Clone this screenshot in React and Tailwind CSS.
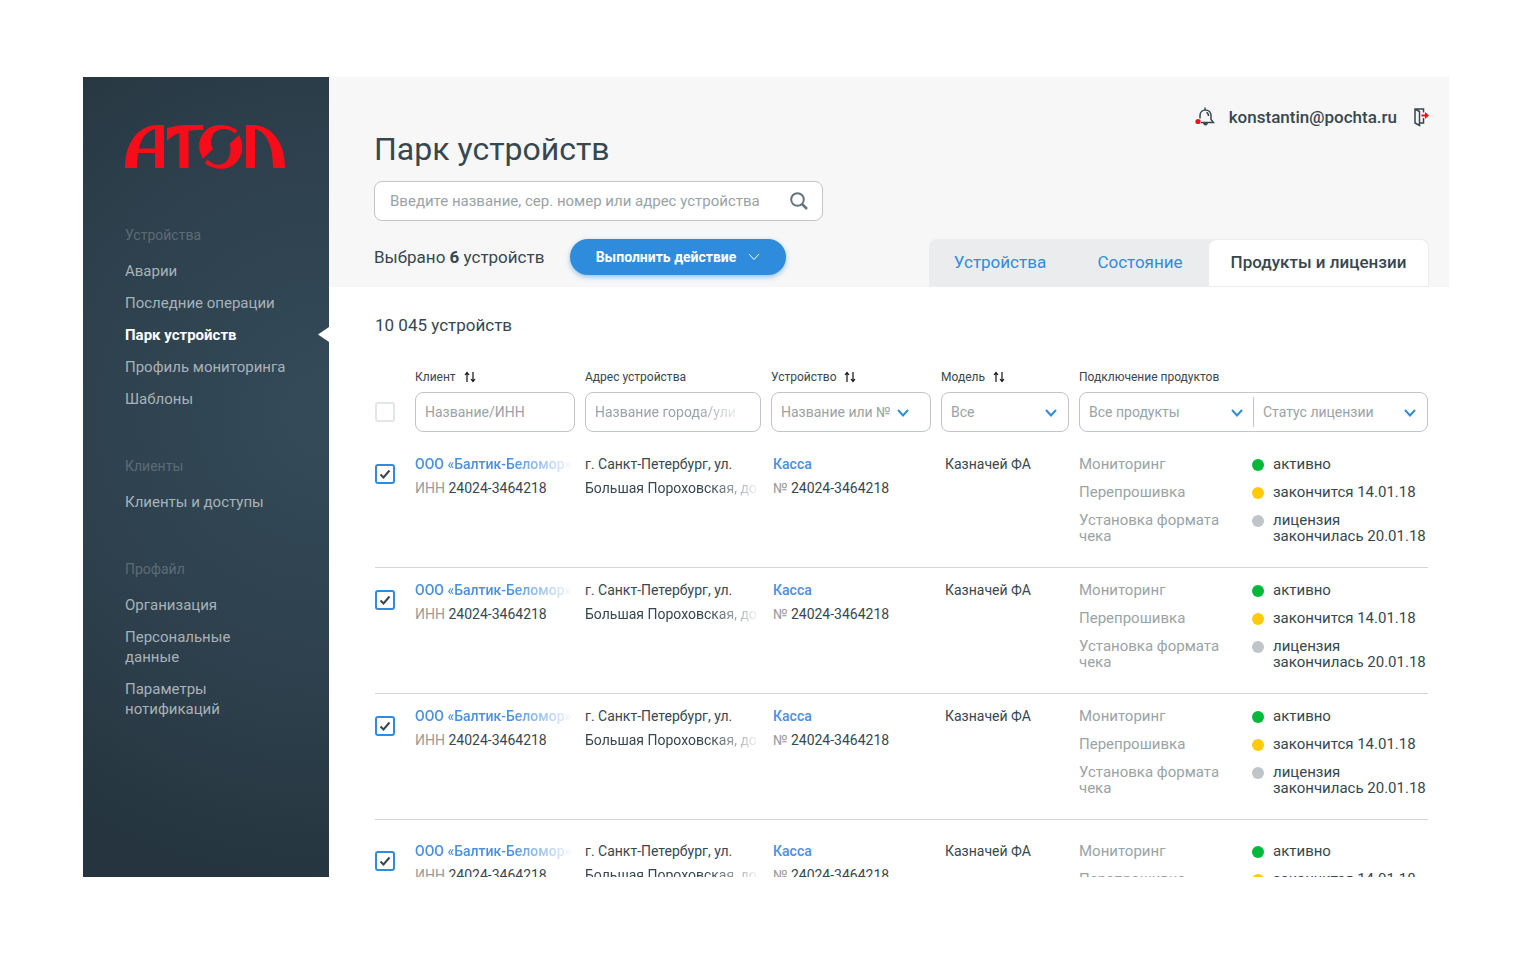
import React, { useState } from 'react';

const navGroups = [
    { title: 'Устройства', items: ['Аварии', 'Последние операции', 'Парк устройств', 'Профиль мониторинга', 'Шаблоны'] },
    { title: 'Клиенты', items: ['Клиенты и доступы'] },
    { title: 'Профайл', items: ['Организация', 'Персональные\nданные', 'Параметры\nнотификаций'] },
];

const tabs = [
    { name: 'Устройства', width: 'w-[142px]' },
    { name: 'Состояние', width: 'w-[138px]' },
    { name: 'Продукты и лицензии', width: 'w-[220px]' },
];

const products = [
    { name: 'Мониторинг', status: 'активно', dot: 'bg-[#00b839]' },
    { name: 'Перепрошивка', status: 'закончится 14.01.18', dot: 'bg-[#ffca0a]' },
    { name: 'Установка формата чека', status: 'лицензия\nзакончилась 20.01.18', dot: 'bg-[#bfc5c9]' },
];

const devices = [1, 2, 3, 4].map((id) => ({
    id,
    client: 'ООО «Балтик-Беломор»',
    inn: '24024-3464218',
    address: ['г. Санкт-Петербург, ул.', 'Большая Пороховская, до'],
    type: 'Касса',
    number: '24024-3464218',
    model: 'Казначей ФА',
}));

function Logo() {
    return (
        <svg className="block w-40 h-11" viewBox="0 0 160 44" fill="#f70d1a" role="img" aria-label="АТОЛ">
            <path fillRule="evenodd" d="M0 43C0 18 13 0 33 0H39V43H30V28H13Q12 35 12 43ZM14 23.5H30V4C22 6 16 13 14 23.5Z" />
            <path d="M42 3Q52 0 62 0H78V5Q70 4.5 63.5 6V43H54.5V8Q48 10 42 16Z" />
            <path d="M78 33.5C71 23 74 9 84 3C93 -2 105 -.5 112.500 5.5L110 8.5C102 1.500 90 3 87 12C85.500 17 86 21 88 24Z" />
            <path d="M114 10C120.500 21 117 35 107 41C98 46 87 44 79.500 38L82.500 34.500C90 42.500 101 41 104 32C106 26 106 22 104.500 19Z" />
            <path d="M121 0H127C147 0 160 18 160 43H148C148 21 142 7 130 4V43H121Z" />
        </svg>
    );
}

function Chevron({ className }) {
    return (
        <svg className={`pointer-events-none w-3 h-2 ${className}`} viewBox="0 0 12 8" fill="none" stroke="currentColor" aria-hidden="true">
            <path d="M1 1L6 6.500L11 1" />
        </svg>
    );
}

function SortButton({ label }) {
    return (
        <button type="button" aria-label={`Сортировать: ${label}`} className="cursor-pointer">
            <svg className="block w-3 h-3" viewBox="0 0 12 12" fill="none" stroke="#111" strokeWidth="1.2">
                <path d="M3 11V2M1 4L3 1.500L5 4M9 1V10M7 8L9 10.500L11 8" />
            </svg>
        </button>
    );
}

function ColumnTitle({ htmlFor, children, sortable }) {
    return (
        <div className="flex items-center gap-2 h-5 mb-[5px]">
            <label htmlFor={htmlFor} className="text-[12px] leading-5 font-normal">{children}</label>
            {sortable && <SortButton label={children} />}
        </div>
    );
}

function FilterSelect({ id, label, placeholder, chevron = 'right-3' }) {
    return (
        <div className="relative flex-1 h-full">
            <select id={id} aria-label={label} className="appearance-none w-full h-full pl-[9px] pr-4 text-[14px] font-normal text-[#9aa3a6] bg-transparent outline-none cursor-pointer">
                <option>{placeholder}</option>
            </select>
            <Chevron className={`absolute top-4 text-[#2f8cdc] stroke-2 ${chevron}`} />
        </div>
    );
}

function Checkbox({ label, checked, onChange }) {
    return (
        <div className="relative w-5 h-5">
            <input
                type="checkbox"
                aria-label={label}
                checked={checked}
                onChange={onChange}
                className="peer block appearance-none w-5 h-5 rounded-[3px] border-2 border-[#e2e6e8] bg-white checked:border-[#2f8cdc] cursor-pointer"
            />
            <svg className="hidden peer-checked:block absolute inset-0 w-5 h-5 pointer-events-none" viewBox="0 0 20 20" fill="none" stroke="#37474f" strokeWidth="2">
                <path d="M5.500 10.500L8.500 13.500L14.500 6.500" />
            </svg>
        </div>
    );
}

function Sidebar({ active, onSelect }) {
    return (
        <aside className="w-[246px] shrink-0 pt-12 pl-[42px] bg-[radial-gradient(ellipse_480px_480px_at_100%_42%,#344b59,#2c3e4a_65%,#25343e)]">
            <Logo />
            <nav className="mt-14 flex flex-col gap-[47px]">
                {navGroups.map((group) => (
                    <section key={group.title}>
                        <h2 className="text-[14px] leading-5 text-[#5c6c76]">{group.title}</h2>
                        <ul className="mt-4 flex flex-col gap-3 text-[15px] leading-5">
                            {group.items.map((item) => (
                                <li key={item} className="relative whitespace-pre-line">
                                    <a
                                        href="#"
                                        onClick={() => onSelect(item)}
                                        className={item === active ? 'font-bold text-white' : 'text-[#a9b2b8] hover:text-white'}
                                    >
                                        {item}
                                    </a>
                                    {item === active && (
                                        <svg className="absolute right-0 top-0.5 w-3 h-4" viewBox="0 0 12 16" fill="#fff" aria-hidden="true">
                                            <path d="M12 0V15L1 7.500Z" />
                                        </svg>
                                    )}
                                </li>
                            ))}
                        </ul>
                    </section>
                ))}
            </nav>
        </aside>
    );
}

function UserBar() {
    return (
        <div className="flex items-center justify-end h-6">
            <button type="button" aria-label="Уведомления" className="cursor-pointer">
                <svg className="block w-5 h-5" viewBox="0 0 20 20" fill="none" stroke="#37474f" strokeWidth="1.500">
                    <path d="M10 3V.500M6 15.500H18.500L16 12.500V8.500C16 5 13.500 3 10.500 3C7.500 3 5 5 5 8.500V11.500M11.500 5.500C13 6 13.500 7 13.500 9" />
                    <path d="M8 16H13Q12.500 18.500 10.500 18.500Q8.500 18.500 8 16Z" fill="#37474f" stroke="none" />
                    <circle cx="3" cy="14.500" r="2.600" fill="#f70d1a" stroke="none" />
                </svg>
            </button>
            <span className="ml-3.5 text-[17px] leading-6 font-medium">konstantin@pochta.ru</span>
            <button type="button" aria-label="Выйти" className="ml-3.5 cursor-pointer">
                <svg className="block w-[18px] h-5" viewBox="0 0 18 20" fill="none" stroke="#37474f" strokeWidth="1.500">
                    <path d="M4 2L8.500 4.500V18.500L4 16V2H12.500V5.500M12.500 11V16H8.500" />
                    <path d="M10.500 8.500H15" stroke="#f70d1a" strokeWidth="2" />
                    <path d="M14 5L18 8.500L14 12Z" fill="#f70d1a" stroke="none" />
                </svg>
            </button>
        </div>
    );
}

function DeviceRow({ device, checked, onToggle }) {
    return (
        <tr className="group align-top border-b border-[#d3d7d9] last:border-b-0">
            <td className="pt-[22px] group-last:pt-[31px]">
                <Checkbox label={`Выбрать устройство ${device.id}`} checked={checked} onChange={onToggle} />
            </td>
            <td className="pt-2.5 group-last:pt-[19px] leading-6">
                <a href="#" className="block w-40 overflow-hidden whitespace-nowrap font-medium text-[#4a90e2] [mask-image:linear-gradient(to_right,black_60%,transparent)]">
                    {device.client}
                </a>
                <p><span className="text-[#9b9b9b]">ИНН</span> {device.inn}</p>
            </td>
            <td className="pt-2.5 group-last:pt-[19px] leading-6">
                <p>{device.address[0]}</p>
                <p className="w-44 overflow-hidden whitespace-nowrap [mask-image:linear-gradient(to_right,black_70%,transparent)]">{device.address[1]}</p>
            </td>
            <td className="pt-2.5 group-last:pt-[19px] pl-0.5 leading-6">
                <a href="#" className="block font-medium text-[#4a90e2]">{device.type}</a>
                <p><span className="text-[#9b9b9b]">№</span> {device.number}</p>
            </td>
            <td className="pt-2.5 group-last:pt-[19px] pl-1 leading-6">{device.model}</td>
            <td className="pt-3.5 group-last:pt-[23px] pb-[23px]">
                <dl className="flex flex-col gap-3 text-[15px] leading-4">
                    {products.map((product) => (
                        <div key={product.name} className="grid grid-cols-[173px_1fr]">
                            <dt className="w-[150px] text-[#9aa3a6]">{product.name}</dt>
                            <dd className="flex gap-[9px]">
                                <span className={`mt-[3px] w-3 h-3 shrink-0 rounded-full ${product.dot}`}></span>
                                <span className="whitespace-pre-line">{product.status}</span>
                            </dd>
                        </div>
                    ))}
                </dl>
            </td>
        </tr>
    );
}

export default function App() {
    const [activeItem, setActiveItem] = useState('Парк устройств');
    const [activeTab, setActiveTab] = useState('Продукты и лицензии');
    const [selected, setSelected] = useState(devices.map((device) => device.id));

    const toggle = (id) => {
        setSelected((ids) => (ids.includes(id) ? ids.filter((other) => other !== id) : [...ids, id]));
    };

    return (
        <div className="h-screen pt-[77px] pb-[76px] pl-[83px] pr-[82px] bg-white font-['Roboto',sans-serif] text-[#37474f]">
            <div className="flex h-full overflow-hidden">
                <Sidebar active={activeItem} onSelect={setActiveItem} />

                <main className="flex-1 min-w-0">
                    <header className="pt-7 pl-[45px] pr-5 bg-[#f7f7f7]">
                        <UserBar />
                        <h1 className="text-[32px] leading-10">Парк устройств</h1>
                        <div className="mt-3 flex items-center w-[449px] h-10 pl-[15px] pr-3.5 bg-white border border-[#bfc5c9] rounded-lg">
                            <input
                                type="search"
                                aria-label="Поиск устройства"
                                placeholder="Введите название, сер. номер или адрес устройства"
                                className="flex-1 min-w-0 text-[15px] placeholder:text-[#9aa3a6] outline-none"
                            />
                            <button type="button" aria-label="Найти" className="cursor-pointer">
                                <svg className="block w-[18px] h-[18px]" viewBox="0 0 18 18" fill="none" stroke="#66757c" strokeWidth="2">
                                    <circle cx="7.500" cy="7.500" r="6.300" />
                                    <path d="M12 12L17 17" strokeWidth="2.500" />
                                </svg>
                            </button>
                        </div>
                        <div className="mt-[18px] flex justify-between h-12">
                            <div className="flex items-center h-9">
                                <p className="w-[196px] text-[17px] leading-6">Выбрано <b>6</b> устройств</p>
                                <button type="button" className="flex items-center justify-center gap-3 w-[216px] h-9 rounded-full bg-[#2f8cdc] text-white text-[14px] font-bold shadow-[0_2px_5px_rgba(47,140,220,0.5)] cursor-pointer">
                                    Выполнить действие
                                    <Chevron className="stroke-1" />
                                </button>
                            </div>
                            <div role="tablist" className="flex bg-[#ebecee] rounded-t-lg text-[17px]">
                                {tabs.map((tab) => (
                                    <button
                                        key={tab.name}
                                        type="button"
                                        role="tab"
                                        aria-selected={tab.name === activeTab}
                                        onClick={() => setActiveTab(tab.name)}
                                        className={`${tab.width} h-full whitespace-nowrap cursor-pointer ${
                                            tab.name === activeTab
                                                ? 'bg-white rounded-t-lg border border-l-0 border-[#ebecee] font-medium'
                                                : 'text-[#2f8cdc]'
                                        }`}
                                    >
                                        {tab.name}
                                    </button>
                                ))}
                            </div>
                        </div>
                    </header>

                    <div className="pt-7 pl-[46px] pr-[21px]">
                        <p className="text-[17px] leading-5">10 045 устройств</p>
                        <table className="mt-8 w-full table-fixed text-left text-[14px]">
                            <colgroup>
                                <col className="w-10" />
                                <col className="w-[170px]" />
                                <col className="w-[186px]" />
                                <col className="w-[170px]" />
                                <col className="w-[138px]" />
                                <col />
                            </colgroup>
                            <thead>
                                <tr className="align-bottom">
                                    <th className="pb-5">
                                        <Checkbox
                                            label="Выбрать все"
                                            checked={false}
                                            onChange={() => setSelected(devices.map((device) => device.id))}
                                        />
                                    </th>
                                    <th className="pb-2.5 pr-2.5">
                                        <ColumnTitle htmlFor="client" sortable>Клиент</ColumnTitle>
                                        <div className="h-10 px-[9px] border border-[#bfc5c9] rounded-lg">
                                            <input id="client" placeholder="Название/ИНН" className="w-full h-full font-normal placeholder:text-[#9aa3a6] outline-none" />
                                        </div>
                                    </th>
                                    <th className="pb-2.5 pr-2.5">
                                        <ColumnTitle htmlFor="address">Адрес устройства</ColumnTitle>
                                        <div className="h-10 pl-[9px] pr-4 border border-[#bfc5c9] rounded-lg">
                                            <input id="address" placeholder="Название города/ули" className="w-full h-full font-normal placeholder:text-[#9aa3a6] outline-none [mask-image:linear-gradient(to_right,black_70%,transparent)]" />
                                        </div>
                                    </th>
                                    <th className="pb-2.5 pr-2.5">
                                        <ColumnTitle htmlFor="device" sortable>Устройство</ColumnTitle>
                                        <div className="h-10 border border-[#bfc5c9] rounded-lg">
                                            <FilterSelect id="device" placeholder="Название или №" chevron="right-[21px]" />
                                        </div>
                                    </th>
                                    <th className="pb-2.5 pr-2.5">
                                        <ColumnTitle htmlFor="model" sortable>Модель</ColumnTitle>
                                        <div className="h-10 border border-[#bfc5c9] rounded-lg">
                                            <FilterSelect id="model" placeholder="Все" chevron="right-[11px]" />
                                        </div>
                                    </th>
                                    <th className="pb-2.5">
                                        <ColumnTitle htmlFor="product">Подключение продуктов</ColumnTitle>
                                        <div className="flex items-center h-10 border border-[#bfc5c9] rounded-lg">
                                            <FilterSelect id="product" placeholder="Все продукты" chevron="right-2.5" />
                                            <span className="w-px h-[30px] bg-[#bfc5c9]"></span>
                                            <FilterSelect id="license" label="Статус лицензии" placeholder="Статус лицензии" chevron="right-[11px]" />
                                        </div>
                                    </th>
                                </tr>
                            </thead>
                            <tbody>
                                {devices.map((device) => (
                                    <DeviceRow
                                        key={device.id}
                                        device={device}
                                        checked={selected.includes(device.id)}
                                        onToggle={() => toggle(device.id)}
                                    />
                                ))}
                            </tbody>
                        </table>
                    </div>
                </main>
            </div>
        </div>
    );
}
